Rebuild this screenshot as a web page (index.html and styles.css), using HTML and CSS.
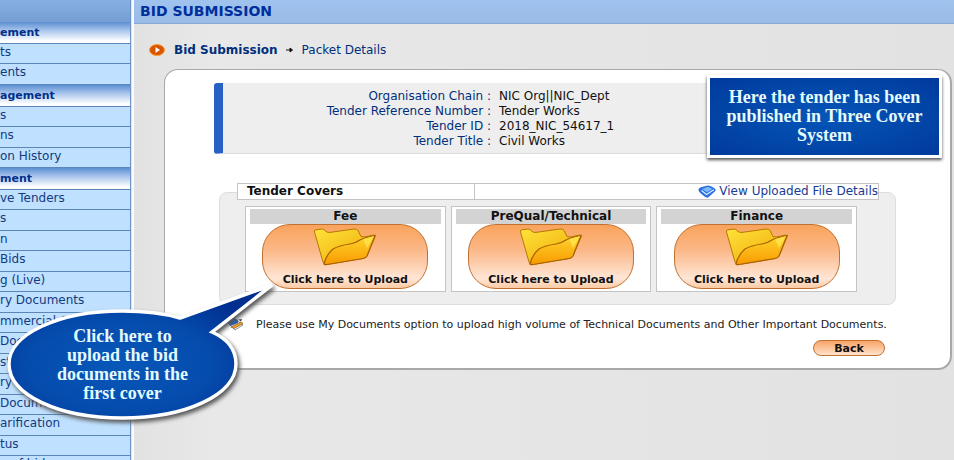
FILE: index.html
```html
<!DOCTYPE html>
<html lang="en">
<head>
<meta charset="UTF-8">
<meta name="viewport" content="width=device-width, initial-scale=1.0">
<title>Bid Submission - Packet Details</title>
<link rel="stylesheet" href="styles.css">
</head>
<body>

<!-- shared icons -->
<svg class="defs" aria-hidden="true">
<defs>
<linearGradient id="gBack" x1="0" y1="0" x2="1" y2="1">
<stop offset="0" stop-color="#ffe23c"/><stop offset="1" stop-color="#eea500"/>
</linearGradient>
<linearGradient id="gFront" x1="0" y1="0" x2="0" y2="1">
<stop offset="0" stop-color="#ffd62e"/><stop offset="1" stop-color="#f79a00"/>
</linearGradient>
<symbol id="folder" viewBox="0 0 64 38">
<path d="M1.500 4Q1 2 3 1.800L9 1Q11 1 12.500 3Q14 4.800 17 4.400L41 1Q44 .8 45 2.500L48 8.500L51 9L61 7Q63 7 62 9L54 28Q53 30 50 30.500L14 36.500Q11 37 10 34Z" fill="url(#gBack)" stroke="#b87800" stroke-width="1"/>
<path d="M11 36Q13 27 20 21Q26 17.500 37 16Q42 15.500 46 12.500Q50 10 62 7.500L54 28Q53 30 50 30.500L14 36.500Q12 37 11 36Z" fill="url(#gFront)" stroke="#a86000" stroke-width="1.200"/>
<path d="M50 11L61 8L54 20Z" fill="#ffe650" opacity=".8"/>
</symbol>
</defs>
</svg>

<div class="page">
<nav class="sidebar">
<div class="side-top"></div>
<h2>ement</h2>
<ul>
<li><a href="#">ts</a></li>
<li><a href="#">ents</a></li>
</ul>
<h2>agement</h2>
<ul>
<li><a href="#">s</a></li>
<li><a href="#">ns</a></li>
<li><a href="#">on History</a></li>
</ul>
<h2>ment</h2>
<ul>
<li><a href="#">ve Tenders</a></li>
<li><a href="#">s</a></li>
<li><a href="#">n</a></li>
<li><a href="#">Bids</a></li>
<li><a href="#">g (Live)</a></li>
<li><a href="#">ry Documents</a></li>
<li><a href="#">mmercial C</a></li>
<li><a href="#">Documents</a></li>
<li><a href="#">st</a></li>
<li><a href="#">ry</a></li>
<li><a href="#">Documents</a></li>
<li><a href="#">arification</a></li>
<li><a href="#">tus</a></li>
<li><a href="#">n of bids</a></li>
</ul>
</nav>

<main class="content">
<h1>BID SUBMISSION</h1>

<div class="crumbs">
<svg class="crumb-icon" viewBox="0 0 16 12">
<ellipse cx="8" cy="6" rx="7.500" ry="5.500" fill="#d95400" stroke="#ff9c2a"/>
<path d="M6.500 3L11 6L6.500 9Z" fill="#fff"/>
</svg>
<a href="#">Bid Submission</a>
<svg class="crumb-arrow" viewBox="0 0 8 6"><path d="M0 3H5M4 1L6.500 3L4 5Z" fill="#111" stroke="#111" stroke-width="1"/></svg>
<span>Packet Details</span>
</div>

<section class="panel">
<div class="info">
<table>
<tr><th scope="row">Organisation Chain :</th><td>NIC Org||NIC_Dept</td></tr>
<tr><th scope="row">Tender Reference Number :</th><td>Tender Works</td></tr>
<tr><th scope="row">Tender ID :</th><td>2018_NIC_54617_1</td></tr>
<tr><th scope="row">Tender Title :</th><td>Civil Works</td></tr>
</table>
</div>

<div class="note">Here the tender has been<br>published in Three Cover<br>System</div>

<div class="covers">
<div class="covers-head">
<h3>Tender Covers</h3>
<a href="#">
<svg class="view-icon" viewBox="0 0 18 13">
<path d="M.8 4.500Q1 3 3 2.600L10 .8L14 2L17.200 4.200L17 6L10 12.200Q8.500 12.600 7 11.500L1.500 7Z" fill="#2a6fe4" stroke="#2460d0" stroke-width=".6"/>
<path d="M4 4L10 1.800L14.500 4L9 7.200Z" fill="#7db8fa"/>
<path d="M3.500 5.500L8.500 9.500L15.800 4.800" fill="none" stroke="#d8ecff" stroke-width="1.300"/>
</svg>View Uploaded File Details</a>
</div>
<div class="cards">
<div class="card">
<h4>Fee</h4>
<button class="upload"><svg><use href="#folder"/></svg>Click here to Upload</button>
</div>
<div class="card">
<h4>PreQual/Technical</h4>
<button class="upload"><svg><use href="#folder"/></svg>Click here to Upload</button>
</div>
<div class="card">
<h4>Finance</h4>
<button class="upload"><svg><use href="#folder"/></svg>Click here to Upload</button>
</div>
</div>
</div>

<p class="hint">
<svg class="hint-icon" viewBox="0 0 18 13">
<path d="M1 4L9 1L17 7L9 12Z" fill="#f4f4f4" stroke="#667" stroke-width=".7"/>
<path d="M1 3L8 0L12 2L12 5L4 8Z" fill="#1d5fc4"/>
<path d="M5 9L15 4L17 5.500L8 10.500Z" fill="#f2a01e" stroke="#7a4a10" stroke-width=".6"/>
<path d="M12 1.500L16 1L15 3.500Z" fill="#444"/>
</svg>Please use My Documents option to upload high volume of Technical Documents and Other Important Documents.</p>

<div class="actions"><button class="back">Back</button></div>
</section>
</main>

<div class="bubble">
<svg viewBox="0 0 280 150">
<defs>
<radialGradient id="gBubble" cx=".42" cy=".6" r=".6">
<stop offset="0" stop-color="#0758ba"/><stop offset=".6" stop-color="#054bac"/><stop offset="1" stop-color="#002f90"/>
</radialGradient>
</defs>
<path d="M173 38L265 5L205 52C223 60 229 72 229 84C229 115 178 138 115 138C52 138 2 115 2 84C2 54 52 31 115 31C136 31 156 33 173 38Z" fill="url(#gBubble)" stroke="#fff" stroke-width="3.500"/>
</svg>
<p>Click here to<br>upload the bid<br>documents in the<br>first cover</p>
</div>
</div>

</body>
</html>
```
FILE: styles.css
```css
*{box-sizing:border-box;}

body{
    font-family:"DejaVu Sans",Verdana,sans-serif;
    font-size:12px;
    margin:0;
    background:#e4e4e4;
    color:#111;
}

h1,h2,h3,h4,p,ul{margin:0;padding:0;}
a{text-decoration:none;color:inherit;}
svg{display:block;}
.defs{position:absolute;width:0;height:0;}

.page{
    position:relative;
    display:flex;
    height:100vh;
    overflow:hidden;
}

/* Sidebar */
.sidebar{
    flex:0 0 131px;
    background:#bfe0ff;
    border-right:1px solid #6d94c4;
    overflow:hidden;
}

.side-top{
    height:22px;
    background:linear-gradient(#87b0e2,#759fd4);
}

.sidebar h2{
    height:22px;
    line-height:22px;
    font-size:11px;
    color:#002f8c;
    background:linear-gradient(#5c8fd2,#a9c5ec 40%,#fff 90%);
    border-bottom:1px solid #5c86b8;
    white-space:nowrap;
}

.sidebar ul{list-style:none;}

.sidebar li{
    height:20px;
    line-height:16px;
    font-size:12px;
    color:#123a80;
    border-bottom:1px solid #5c86b8;
    white-space:nowrap;
}

.sidebar li:nth-child(even){height:21px;}

/* Content */
.content{
    flex:1;
    min-width:0;
    margin-left:1px;
    border-left:2px solid #f8fbff;
    background:linear-gradient(90deg,#e2e2e2,#e8e8e8 10%,#e2e2e2);
}

h1{
    height:24px;
    line-height:22px;
    padding-left:6px;
    font-size:14px;
    color:#002f9c;
    background:linear-gradient(#9fc2ee,#9abce6);
    border-bottom:1px solid #88a8d0;
}

.crumbs{
    display:flex;
    align-items:center;
    height:45px;
    padding:6px 15px 0;
    font-size:12px;
    color:#002f7c;
}

.crumbs a{font-weight:bold;}
.crumb-icon{width:16px;height:12px;margin-right:9px;}
.crumb-arrow{width:8px;height:6px;margin:0 8px;}

.panel{
    position:relative;
    margin:0 2px 0 30px;
    padding:13px 54px 12px 49px;
    background:#fff;
    border:1px solid #a8a8a8;
    border-right-width:2px;
    border-bottom-width:2px;
    border-radius:14px;
}

.info{
    height:71px;
    padding:6px 0;
    background:#eee;
    border-left:9px solid #2860c4;
    border-bottom:1px solid #ddd;
    border-radius:3px;
}

.info table{
    width:100%;
    border-collapse:collapse;
    table-layout:fixed;
}

.info th,.info td{
    height:15px;
    padding:0;
    line-height:15px;
    font-size:12px;
    white-space:nowrap;
}

.info th{
    width:268px;
    text-align:right;
    font-weight:normal;
    color:#002f7c;
}

.info td{padding-left:8px;}

/* Notes over the page */
.note,.bubble p{
    font-family:Georgia,"Liberation Serif",serif;
    font-weight:bold;
    font-size:18px;
    line-height:19px;
    text-align:center;
    color:#e4fbff;
}

.note{
    position:absolute;
    top:5px;
    right:8px;
    width:235px;
    padding:10px 0;
    background:radial-gradient(#0556b8,#003a9c);
    border:3px solid #fff;
    box-shadow:0 2px 3px #555;
}

.bubble{
    position:absolute;
    left:7px;
    top:280px;
    width:280px;
}

.bubble svg{width:280px;height:150px;filter:drop-shadow(2px 3px 2px #555);}

.bubble p{
    position:absolute;
    top:47px;
    left:0;
    width:231px;
}

/* Covers */
.covers{
    margin:38px 0 0 5px;
    padding:0 16px 12px 17px;
    background:#eee;
    border:1px solid #ddd;
    border-radius:8px;
}

.covers-head{
    display:flex;
    height:17px;
    margin-top:-10px;
    line-height:15px;
    background:#fff;
    border:1px solid #c4c4c4;
}

.covers-head h3{
    width:237px;
    padding-left:9px;
    font-size:12px;
    border-right:1px solid #c4c4c4;
}

.covers-head a{
    display:flex;
    align-items:center;
    margin-left:auto;
    font-size:12px;
    color:#1a3a94;
}

.view-icon{width:18px;height:13px;margin-right:3px;}

.cards{
    display:grid;
    grid-template-columns:repeat(3,1fr);
    gap:5px;
    margin:6px 22px 0 8px;
}

.card{
    padding:2px 4px;
    text-align:center;
    background:#fff;
    border:1px solid #c4c4c4;
}

.card h4{
    height:15px;
    line-height:15px;
    font-size:12px;
    background:#d3d3d3;
}

button{
    font-family:inherit;
    font-weight:bold;
    font-size:11px;
    color:#111;
    border:1px solid #c07030;
    cursor:pointer;
}

.upload{
    display:flex;
    flex-direction:column;
    align-items:center;
    justify-content:space-between;
    width:87%;
    height:65px;
    margin:0 auto;
    padding:3px 0 2px;
    border-radius:28px;
    background:linear-gradient(#f9a35c,#fbb888 40%,#ffe6d6 85%,#fbcba4);
}

.upload svg{width:64px;height:38px;}

/* Bottom */
.hint{
    display:flex;
    align-items:center;
    margin:13px 0 0 12px;
    line-height:13px;
    font-size:11px;
    white-space:nowrap;
    color:#222;
}

.hint-icon{width:18px;height:13px;margin-right:12px;}

.actions{
    display:flex;
    justify-content:flex-end;
    padding:9px 11px 0;
}

.back{
    width:72px;
    height:16px;
    padding:0;
    line-height:13px;
    border-radius:8px;
    background:linear-gradient(#f8a468,#ffe2cc);
}
```
